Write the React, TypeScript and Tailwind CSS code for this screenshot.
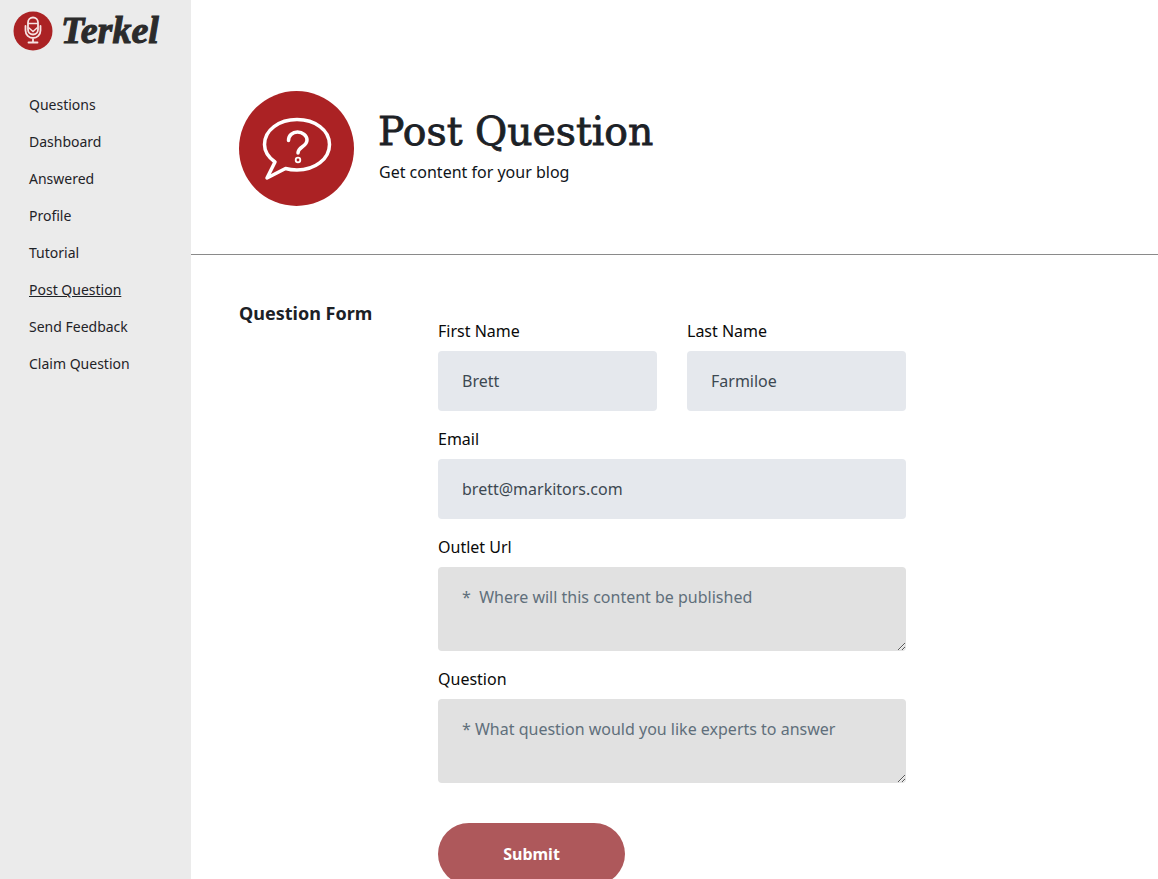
const navItems = ["Questions", "Dashboard", "Answered", "Profile", "Tutorial", "Post Question", "Send Feedback", "Claim Question"];

const Field = ({ label, value }: { label: string; value: string }) => (
  <div className="flex-1 mb-4">
    <label className="block h-6 mb-2 text-[16px] leading-6 text-[#0a0a0a]">{label}</label>
    <input
      defaultValue={value}
      className="block w-full h-[60px] px-6 rounded-[4px] bg-[#e5e8ed] text-[16px] text-[#3d4852] outline-none"
    />
  </div>
);

const Area = ({ label, placeholder }: { label: string; placeholder: string }) => (
  <div className="mb-4">
    <label className="block h-6 mb-2 text-[16px] leading-6 text-[#0a0a0a]">{label}</label>
    <textarea
      placeholder={placeholder}
      className="block w-full h-[84px] px-6 py-[18px] rounded-[4px] bg-[#e1e1e1] text-[16px] leading-6 text-[#3d4852] placeholder:text-[#606f7b] outline-none whitespace-pre-wrap"
    />
  </div>
);

const MicLogo = () => (
  <svg width="40" height="40" viewBox="0 0 40 40" fill="none" className="shrink-0">
    <circle cx="20" cy="20" r="19.5" fill="#ab2224" />
    <rect x="15" y="6.500" width="10" height="17" rx="5" stroke="#f6e3e3" strokeWidth="1.800" />
    <path d="M15 12.500h10" stroke="#f6e3e3" strokeWidth="1.500" />
    <path d="M15.500 16.500l4.500 4 4.500-4" stroke="#f6e3e3" strokeWidth="1.500" />
    <path d="M12.500 15v4.500a7.500 7.500 0 0 0 15 0V15M20 27v4M15.500 31.500h9" stroke="#f6e3e3" strokeWidth="1.800" strokeLinecap="round" />
  </svg>
);

const BubbleIcon = () => (
  <svg width="70" height="64" viewBox="0 0 70 64" fill="none">
    <path
      d="M13 45C6 40 2.500 34 2.500 27.500 2.500 13 17 2.500 35 2.500S67.500 13 67.500 27.500 53 53 35 53c-4 0-8-.5-11.500-1.500L5 61Z"
      stroke="#fff"
      strokeWidth="3.500"
      strokeLinejoin="round"
    />
    <path d="M26.500 23.500c0-5 4-8.500 9-8.500s9.500 3.500 9.500 8c0 7-9 6.500-9 13" stroke="#fff" strokeWidth="3.500" strokeLinecap="round" />
    <circle cx="36" cy="43" r="2.300" stroke="#fff" strokeWidth="1.800" />
  </svg>
);

export default function App() {
  return (
    <div className="flex h-screen overflow-hidden bg-white font-['Noto_Sans','Open_Sans',sans-serif]">
      <aside className="w-[191px] shrink-0 bg-[#ebebeb]">
        <div className="flex gap-2 pl-[13px] pt-[11px] h-[87px]">
          <MicLogo />
          <span className="font-['Liberation_Serif',serif] font-bold italic text-[38px] leading-[38px] text-[#2b2b2b] [-webkit-text-stroke:1px_#2b2b2b]">Terkel</span>
        </div>
        <nav className="pl-[29px]">
          {navItems.map((item) => (
            <a
              key={item}
              className={`block h-[37px] text-[14px] leading-[36px] text-[#1f2328] ${item === "Post Question" ? "underline" : ""}`}
            >
              {item}
            </a>
          ))}
        </nav>
      </aside>
      <main className="flex-1 min-w-0">
        <header className="flex items-start gap-[24px] h-[255px] pl-[48px] pt-[91px] border-b border-[#8a8a8a]">
          <div className="flex items-center justify-center w-[115px] h-[115px] rounded-full bg-[#ab2224]">
            <BubbleIcon />
          </div>
          <div className="mt-[16px]">
            <h1 className="mb-[3px] font-['DejaVu_Serif',serif] text-[39.3px] leading-[50px] text-[#1c2126] [-webkit-text-stroke:0.8px_#1c2126]">Post Question</h1>
            <p className="pl-px text-[16px] leading-6 text-[#0f1419]">Get content for your blog</p>
          </div>
        </header>
        <section className="flex pl-[48px] pt-[46px]">
          <h2 className="w-[199px] shrink-0 text-[18px] leading-6 font-bold text-[#1c2126]">Question Form</h2>
          <form className="w-[468px] pt-[18px]">
            <div className="flex gap-[30px]">
              <Field label="First Name" value="Brett" />
              <Field label="Last Name" value="Farmiloe" />
            </div>
            <Field label="Email" value="brett@markitors.com" />
            <Area label="Outlet Url" placeholder="*  Where will this content be published" />
            <Area label="Question" placeholder="* What question would you like experts to answer" />
            <button type="button" className="block w-[187px] h-[62px] mt-[40px] rounded-full bg-[#ae585b] text-[16px] font-bold text-white">
              Submit
            </button>
          </form>
        </section>
      </main>
    </div>
  );
}
